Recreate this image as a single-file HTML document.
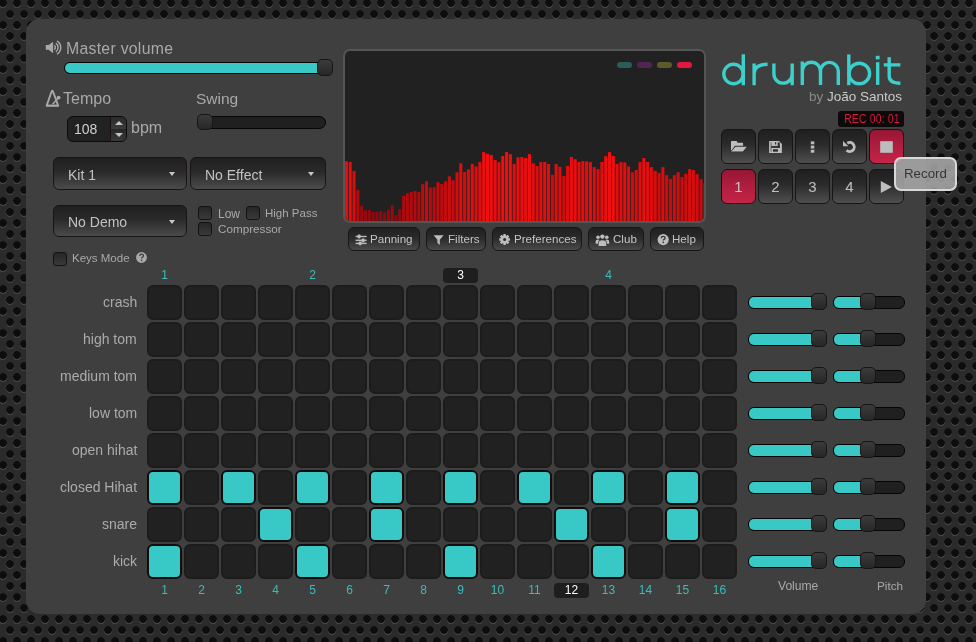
<!DOCTYPE html>
<html><head><meta charset="utf-8">
<style>
*{box-sizing:border-box;margin:0;padding:0}
html,body{width:976px;height:642px;overflow:hidden}
body{font-family:"Liberation Sans",sans-serif;position:relative;background-color:#2b2b2b;
background-image:
 radial-gradient(circle at 7px 11px,#0d0d0d 0,#0d0d0d 3.45px,rgba(13,13,13,0) 4.15px),
 radial-gradient(circle at 7px 11px,#0d0d0d 0,#0d0d0d 3.45px,rgba(13,13,13,0) 4.15px),
 radial-gradient(circle at 7px 12.3px,rgba(78,78,78,.7) 0,rgba(78,78,78,.7) 3.5px,rgba(78,78,78,0) 4.2px),
 radial-gradient(circle at 7px 12.3px,rgba(78,78,78,.7) 0,rgba(78,78,78,.7) 3.5px,rgba(78,78,78,0) 4.2px);
background-size:14px 22px;background-position:-4px -8px,3px 3px,-4px -8px,3px 3px;}
.abs{position:absolute}
#panel{position:absolute;left:26px;top:19px;width:900px;height:595px;border-radius:14px;background:#3f3f3f}
.txt{position:absolute;white-space:nowrap;color:#a9a9a9;line-height:1;will-change:transform}
.trk{position:absolute;height:12px;border-radius:6px;background:#202020;border:1px solid #050505;overflow:hidden}
.trk .fill{position:absolute;left:0;top:0;bottom:0;background:#38c8c6}
.thumb{position:absolute;width:15px;height:17px;border-radius:5px;background:linear-gradient(#3b3b3b,#272727);border:1px solid #1a1414}
.sel{position:absolute;height:33px;border-radius:6px;border:1px solid #1a1515;background:linear-gradient(#1f1f1f 0%,#2a2a2a 45%,#4b4b4b 100%);color:#c2c2c2;font-size:14px;line-height:35px;white-space:nowrap;will-change:transform}
.sel .arr{position:absolute;right:11px;top:13.5px;width:0;height:0;border-left:3.6px solid transparent;border-right:3.6px solid transparent;border-top:4.4px solid #c8c8c8}
.cb{position:absolute;width:14px;height:14px;border-radius:3px;border:1px solid #161212;background:linear-gradient(#262626,#3a3a3a)}
.cell{position:absolute;width:35px;height:35px;border-radius:6px;background:#212121;border:2px solid #1c1c1c}
.cell.on{background:#38c8c5;border:2px solid #120d0d}
.dlab{position:absolute;right:839px;height:35px;line-height:35px;font-size:14px;color:#ababab;white-space:nowrap;text-align:right;will-change:transform}
.bnum{position:absolute;width:35px;height:15px;line-height:15px;text-align:center;font-size:12px;color:#3bbcbc;will-change:transform}
.bnum.hl{background:#1e1e1e;color:#fff;border-radius:4px}
.btn{position:absolute;height:24px;border-radius:6px;border:1px solid #1a1515;background:linear-gradient(#202020,#2a2a2a 45%,#4a4a4a)}
.sq{position:absolute;width:35px;height:35px;border-radius:6px;border:1px solid #1a1515;background:linear-gradient(#1f1f1f,#2b2b2b 45%,#4f4f4f);color:#c0c0c0;font-size:15px;text-align:center;line-height:34px;will-change:transform}
.sq.red{background:linear-gradient(#961634,#b01e3f 50%,#c42447);border-color:#1a1010}
</style></head><body>
<div id="panel"></div>

<!-- master volume -->
<svg class="abs" style="left:42px;top:37px" width="24" height="20" viewBox="42 37 24 20">
 <path d="M45.8 45.1H48.6L53.1 41.8V53.2L48.6 49.8H45.8z" fill="#a9a9a9"/>
 <path d="M54.3 45.4A2.6 2.6 0 0 1 54.3 49.6M55.8 43.2A5.2 5.2 0 0 1 55.8 51.8M57 40.8A7.9 7.9 0 0 1 57 54.2" stroke="#a9a9a9" stroke-width="1.4" fill="none"/>
</svg>
<div class="txt" style="left:66px;top:40.8px;font-size:15.8px;letter-spacing:0.28px">Master volume</div>
<div class="trk" style="left:64px;top:62px;width:268px"><div class="fill" style="width:260px"></div></div>
<div class="thumb" style="left:317px;top:59px;width:16px"></div>

<!-- tempo -->
<svg class="abs" style="left:42px;top:86px" width="24" height="24" viewBox="42 86 24 24">
 <path d="M52.3 90.6Q51.8 90.6 51.4 92L46.6 105.8H58.2L53.2 92Q52.8 90.6 52.3 90.6z" fill="none" stroke="#a9a9a9" stroke-width="1.9" stroke-linejoin="round"/>
 <path d="M47.5 105.5H57.6" stroke="#a9a9a9" stroke-width="1.5"/>
 <path d="M52.6 104.2L58.4 97.7" stroke="#a9a9a9" stroke-width="1.5"/>
 <circle cx="58.6" cy="97.6" r="1.9" fill="#a9a9a9"/>
</svg>
<div class="txt" style="left:63px;top:90.5px;font-size:16px">Tempo</div>
<div class="abs" style="left:67px;top:116px;width:60px;height:25.5px;border-radius:6px;background:#222;border:1px solid #0b0b0b;overflow:hidden">
 <div class="txt" style="left:5.5px;top:5px;font-size:14px;color:#cfcfcf">108</div>
 <div class="abs" style="left:41.5px;top:0;width:18px;height:12px;background:linear-gradient(#2a2a2a,#3b3b3b);border-left:1px solid #1c1212"></div>
 <div class="abs" style="left:41.5px;top:12px;width:18px;height:12px;background:linear-gradient(#262626,#3a3a3a);border-left:1px solid #1c1212"></div>
 <div class="abs" style="left:46.6px;top:4.2px;width:0;height:0;border-left:4.1px solid transparent;border-right:4.1px solid transparent;border-bottom:4.2px solid #c4c4c4"></div>
 <div class="abs" style="left:46.6px;top:16.2px;width:0;height:0;border-left:4.1px solid transparent;border-right:4.1px solid transparent;border-top:4.2px solid #c4c4c4"></div>
</div>
<div class="txt" style="left:131px;top:120px;font-size:16px">bpm</div>

<!-- swing -->
<div class="txt" style="left:196px;top:90.5px;font-size:15.5px">Swing</div>
<div class="trk" style="left:197px;top:116px;width:129px;height:13px;border-radius:6.5px"></div>
<div class="thumb" style="left:197px;top:114px;height:16px;width:16px"></div>

<!-- selects -->
<div class="sel" style="left:53px;top:157px;width:134px;padding-left:14px">Kit 1<span class="arr"></span></div>
<div class="sel" style="left:190px;top:157px;width:136px;padding-left:14px">No Effect<span class="arr"></span></div>
<div class="sel" style="left:53px;top:205px;width:134px;height:32px;line-height:33px;padding-left:14px">No Demo<span class="arr"></span></div>

<!-- checkboxes -->
<div class="cb" style="left:198px;top:206px"></div>
<div class="txt" style="left:218px;top:207.5px;font-size:12px">Low</div>
<div class="cb" style="left:246px;top:206px"></div>
<div class="txt" style="left:265px;top:207.5px;font-size:11.5px">High Pass</div>
<div class="cb" style="left:198px;top:222px"></div>
<div class="txt" style="left:218px;top:223px;font-size:11.7px">Compressor</div>
<div class="cb" style="left:53px;top:252px"></div>
<div class="txt" style="left:72px;top:252.5px;font-size:11.5px">Keys Mode</div>
<svg class="abs" style="left:136px;top:252px" width="11" height="11" viewBox="0 0 11 11">
 <circle cx="5.5" cy="5.5" r="5.4" fill="#a9a9a9"/>
 <path d="M3.8 4.1q0-1.9 1.8-1.9q1.8 0 1.8 1.6q0 1-1.1 1.5q-.6.3-.6 1.1" fill="none" stroke="#3f3f3f" stroke-width="1.3"/>
 <circle cx="5.6" cy="8.4" r=".8" fill="#3f3f3f"/>
</svg>

<!-- visualizer -->
<div class="abs" style="left:343px;top:49px;width:363px;height:174px;border-radius:7px;border:2px solid #555;background:#212121;overflow:hidden">
 <svg class="abs" style="left:0;top:0" width="360" height="170"><rect x="-0.10" y="110.3" width="3.05" height="61.7" fill="rgb(231,13,14)"/><rect x="3.71" y="111.0" width="3.05" height="61.0" fill="rgb(229,13,14)"/><rect x="7.53" y="119.9" width="3.05" height="52.1" fill="rgb(214,12,14)"/><rect x="11.34" y="139.1" width="3.05" height="32.9" fill="rgb(182,10,14)"/><rect x="15.15" y="155.0" width="3.05" height="17.0" fill="rgb(155,9,14)"/><rect x="18.96" y="159.3" width="3.05" height="12.7" fill="rgb(148,8,14)"/><rect x="22.78" y="159.0" width="3.05" height="13.0" fill="rgb(148,9,14)"/><rect x="26.59" y="161.0" width="3.05" height="11.0" fill="rgb(145,8,14)"/><rect x="30.40" y="161.0" width="3.05" height="11.0" fill="rgb(145,8,14)"/><rect x="34.22" y="160.0" width="3.05" height="12.0" fill="rgb(146,8,14)"/><rect x="38.03" y="161.5" width="3.05" height="10.5" fill="rgb(144,8,14)"/><rect x="41.84" y="159.0" width="3.05" height="13.0" fill="rgb(148,9,14)"/><rect x="45.66" y="154.4" width="3.05" height="17.6" fill="rgb(156,9,14)"/><rect x="49.47" y="164.0" width="3.05" height="8.0" fill="rgb(140,8,14)"/><rect x="53.28" y="158.3" width="3.05" height="13.7" fill="rgb(149,9,14)"/><rect x="57.09" y="144.8" width="3.05" height="27.2" fill="rgb(172,10,14)"/><rect x="60.91" y="142.3" width="3.05" height="29.7" fill="rgb(176,10,14)"/><rect x="64.72" y="141.0" width="3.05" height="31.0" fill="rgb(179,10,14)"/><rect x="68.53" y="140.1" width="3.05" height="31.9" fill="rgb(180,10,14)"/><rect x="72.35" y="141.0" width="3.05" height="31.0" fill="rgb(179,10,14)"/><rect x="76.16" y="133.1" width="3.05" height="38.9" fill="rgb(192,11,14)"/><rect x="79.97" y="130.3" width="3.05" height="41.7" fill="rgb(197,11,14)"/><rect x="83.79" y="136.5" width="3.05" height="35.5" fill="rgb(186,11,14)"/><rect x="87.60" y="136.3" width="3.05" height="35.7" fill="rgb(187,11,14)"/><rect x="91.41" y="131.2" width="3.05" height="40.8" fill="rgb(195,11,14)"/><rect x="95.22" y="133.1" width="3.05" height="38.9" fill="rgb(192,11,14)"/><rect x="99.04" y="130.3" width="3.05" height="41.7" fill="rgb(197,11,14)"/><rect x="102.85" y="125.4" width="3.05" height="46.6" fill="rgb(205,12,14)"/><rect x="106.66" y="129.4" width="3.05" height="42.6" fill="rgb(198,11,14)"/><rect x="110.48" y="121.3" width="3.05" height="50.7" fill="rgb(212,12,14)"/><rect x="114.29" y="112.3" width="3.05" height="59.7" fill="rgb(227,13,14)"/><rect x="118.10" y="121.0" width="3.05" height="51.0" fill="rgb(212,12,14)"/><rect x="121.92" y="118.4" width="3.05" height="53.6" fill="rgb(217,12,14)"/><rect x="125.73" y="112.9" width="3.05" height="59.1" fill="rgb(226,13,14)"/><rect x="129.54" y="115.5" width="3.05" height="56.5" fill="rgb(222,13,14)"/><rect x="133.36" y="111.0" width="3.05" height="61.0" fill="rgb(229,13,14)"/><rect x="137.17" y="101.1" width="3.05" height="70.9" fill="rgb(240,14,14)"/><rect x="140.98" y="102.8" width="3.05" height="69.2" fill="rgb(240,14,14)"/><rect x="144.79" y="104.0" width="3.05" height="68.0" fill="rgb(240,14,14)"/><rect x="148.61" y="109.0" width="3.05" height="63.0" fill="rgb(233,13,14)"/><rect x="152.42" y="111.1" width="3.05" height="60.9" fill="rgb(229,13,14)"/><rect x="156.23" y="105.0" width="3.05" height="67.0" fill="rgb(240,14,14)"/><rect x="160.05" y="101.1" width="3.05" height="70.9" fill="rgb(240,14,14)"/><rect x="163.86" y="103.1" width="3.05" height="68.9" fill="rgb(240,14,14)"/><rect x="167.67" y="112.9" width="3.05" height="59.1" fill="rgb(226,13,14)"/><rect x="171.49" y="106.3" width="3.05" height="65.7" fill="rgb(237,13,14)"/><rect x="175.30" y="106.0" width="3.05" height="66.0" fill="rgb(238,13,14)"/><rect x="179.11" y="106.9" width="3.05" height="65.1" fill="rgb(236,13,14)"/><rect x="182.92" y="103.1" width="3.05" height="68.9" fill="rgb(240,14,14)"/><rect x="186.74" y="112.3" width="3.05" height="59.7" fill="rgb(227,13,14)"/><rect x="190.55" y="115.0" width="3.05" height="57.0" fill="rgb(223,13,14)"/><rect x="194.36" y="111.1" width="3.05" height="60.9" fill="rgb(229,13,14)"/><rect x="198.18" y="111.0" width="3.05" height="61.0" fill="rgb(229,13,14)"/><rect x="201.99" y="113.0" width="3.05" height="59.0" fill="rgb(226,13,14)"/><rect x="205.80" y="123.9" width="3.05" height="48.1" fill="rgb(208,12,14)"/><rect x="209.62" y="112.9" width="3.05" height="59.1" fill="rgb(226,13,14)"/><rect x="213.43" y="115.8" width="3.05" height="56.2" fill="rgb(221,13,14)"/><rect x="217.24" y="125.0" width="3.05" height="47.0" fill="rgb(206,12,14)"/><rect x="221.05" y="115.0" width="3.05" height="57.0" fill="rgb(223,13,14)"/><rect x="224.87" y="106.0" width="3.05" height="66.0" fill="rgb(238,13,14)"/><rect x="228.68" y="108.2" width="3.05" height="63.8" fill="rgb(234,13,14)"/><rect x="232.49" y="111.0" width="3.05" height="61.0" fill="rgb(229,13,14)"/><rect x="236.31" y="110.1" width="3.05" height="61.9" fill="rgb(231,13,14)"/><rect x="240.12" y="110.3" width="3.05" height="61.7" fill="rgb(231,13,14)"/><rect x="243.93" y="111.1" width="3.05" height="60.9" fill="rgb(229,13,14)"/><rect x="247.75" y="116.1" width="3.05" height="55.9" fill="rgb(221,12,14)"/><rect x="251.56" y="118.1" width="3.05" height="53.9" fill="rgb(217,12,14)"/><rect x="255.37" y="111.0" width="3.05" height="61.0" fill="rgb(229,13,14)"/><rect x="259.18" y="105.2" width="3.05" height="66.8" fill="rgb(239,13,14)"/><rect x="263.00" y="101.1" width="3.05" height="70.9" fill="rgb(240,14,14)"/><rect x="266.81" y="105.0" width="3.05" height="67.0" fill="rgb(240,14,14)"/><rect x="270.62" y="112.9" width="3.05" height="59.1" fill="rgb(226,13,14)"/><rect x="274.44" y="111.1" width="3.05" height="60.9" fill="rgb(229,13,14)"/><rect x="278.25" y="111.4" width="3.05" height="60.6" fill="rgb(229,13,14)"/><rect x="282.06" y="115.5" width="3.05" height="56.5" fill="rgb(222,13,14)"/><rect x="285.88" y="121.3" width="3.05" height="50.7" fill="rgb(212,12,14)"/><rect x="289.69" y="119.0" width="3.05" height="53.0" fill="rgb(216,12,14)"/><rect x="293.50" y="111.1" width="3.05" height="60.9" fill="rgb(229,13,14)"/><rect x="297.31" y="107.1" width="3.05" height="64.9" fill="rgb(236,13,14)"/><rect x="301.13" y="111.0" width="3.05" height="61.0" fill="rgb(229,13,14)"/><rect x="304.94" y="116.1" width="3.05" height="55.9" fill="rgb(221,12,14)"/><rect x="308.75" y="119.9" width="3.05" height="52.1" fill="rgb(214,12,14)"/><rect x="312.57" y="121.9" width="3.05" height="50.1" fill="rgb(211,12,14)"/><rect x="316.38" y="116.1" width="3.05" height="55.9" fill="rgb(221,12,14)"/><rect x="320.19" y="124.1" width="3.05" height="47.9" fill="rgb(207,12,14)"/><rect x="324.00" y="127.9" width="3.05" height="44.1" fill="rgb(201,11,14)"/><rect x="327.82" y="124.1" width="3.05" height="47.9" fill="rgb(207,12,14)"/><rect x="331.63" y="121.2" width="3.05" height="50.8" fill="rgb(212,12,14)"/><rect x="335.44" y="126.0" width="3.05" height="46.0" fill="rgb(204,12,14)"/><rect x="339.26" y="122.8" width="3.05" height="49.2" fill="rgb(209,12,14)"/><rect x="343.07" y="118.0" width="3.05" height="54.0" fill="rgb(218,12,14)"/><rect x="346.88" y="119.0" width="3.05" height="53.0" fill="rgb(216,12,14)"/><rect x="350.70" y="123.2" width="3.05" height="48.8" fill="rgb(209,12,14)"/><rect x="354.51" y="128.3" width="3.05" height="43.7" fill="rgb(200,11,14)"/><rect x="358.32" y="132.4" width="3.05" height="39.6" fill="rgb(193,11,14)"/></svg>
 <div class="abs" style="left:272px;top:11px;width:15px;height:6px;border-radius:3px;background:#2b5c5a"></div>
 <div class="abs" style="left:292px;top:11px;width:15px;height:6px;border-radius:3px;background:#512553"></div>
 <div class="abs" style="left:312px;top:11px;width:15px;height:6px;border-radius:3px;background:#5b5b2a"></div>
 <div class="abs" style="left:332px;top:11px;width:15px;height:6px;border-radius:3px;background:#e3173f"></div>
</div>

<!-- tool buttons -->
<div class="btn" style="left:348px;top:227px;width:72px"></div>
<div class="btn" style="left:426px;top:227px;width:60px"></div>
<div class="btn" style="left:492px;top:227px;width:90px"></div>
<div class="btn" style="left:588px;top:227px;width:56px"></div>
<div class="btn" style="left:650px;top:227px;width:54px"></div>
<div class="txt" style="left:370px;top:234px;font-size:11.6px;color:#c4c4c4;margin-top:-1px">Panning</div>
<div class="txt" style="left:447.5px;top:234px;font-size:11.6px;color:#c4c4c4;margin-top:-1px">Filters</div>
<div class="txt" style="left:513.5px;top:234px;font-size:11.6px;color:#c4c4c4;margin-top:-1px">Preferences</div>
<div class="txt" style="left:612.5px;top:234px;font-size:11.6px;color:#c4c4c4;margin-top:-1px">Club</div>
<div class="txt" style="left:672px;top:234px;font-size:11.6px;color:#c4c4c4;margin-top:-1px">Help</div>
<svg class="abs" style="left:340px;top:225px" width="340" height="26" viewBox="340 225 340 26">
 <g fill="#bdbdbd" stroke="none">
  <!-- sliders -->
  <rect x="355.6" y="235.8" width="11" height="1.4"/><rect x="355.6" y="239.6" width="11" height="1.4"/><rect x="355.6" y="242.7" width="11" height="1.4"/>
  <rect x="357.6" y="234.6" width="3" height="3.8" rx="1"/><rect x="361.6" y="238.4" width="3" height="3.8" rx="1"/><rect x="358.6" y="241.5" width="3" height="3.8" rx="1"/>
  <!-- funnel -->
  <path d="M433.6 235.2h10l-3.8 4.6v5.1l-2.4-2v-3.1z"/>
  <!-- help circle -->
  <circle cx="663.2" cy="239.6" r="5.6"/>
  <!-- users -->
  <circle cx="602.4" cy="236.6" r="2.2"/><circle cx="598" cy="237.3" r="1.8"/><circle cx="606.8" cy="237.3" r="1.8"/>
  <path d="M598.6 246v-3.2q0-2.6 3.8-2.6q3.8 0 3.8 2.6v3.2z"/>
  <path d="M595.6 243.8v-2.2q0-2 2.4-2q1.2 0 1.6.4q-1.6.8-1.6 2.6v1.2z"/>
  <path d="M609.2 243.8v-2.2q0-2-2.4-2q-1.2 0-1.6.4q1.6.8 1.6 2.6v1.2z"/>
 </g>
 <!-- gear -->
 <g transform="translate(504.6 239.5)">
  <g fill="#bdbdbd">
   <circle r="3.9"/>
   <rect x="-1.3" y="-5.4" width="2.6" height="10.8" rx=".4"/>
   <rect x="-1.3" y="-5.4" width="2.6" height="10.8" rx=".4" transform="rotate(45)"/>
   <rect x="-1.3" y="-5.4" width="2.6" height="10.8" rx=".4" transform="rotate(90)"/>
   <rect x="-1.3" y="-5.4" width="2.6" height="10.8" rx=".4" transform="rotate(135)"/>
  </g>
  <circle r="1.5" fill="#2e2e2e"/>
 </g>
 <path d="M661.3 238.2q0-1.8 1.9-1.8q1.9 0 1.9 1.5q0 1-1.1 1.5q-.7.3-.7 1.1" fill="none" stroke="#333" stroke-width="1.3"/>
 <circle cx="663.3" cy="242.4" r=".8" fill="#333"/>
</svg>

<!-- logo -->
<svg class="abs" style="left:700px;top:40px" width="220" height="70" viewBox="700 40 220 70">
 <g fill="none" stroke="#3ccfcb" stroke-width="3.4" stroke-linecap="butt">
  <circle cx="733.5" cy="74" r="9.7"/>
  <path d="M743.3 54.3V85.2"/>
  <path d="M754.1 63.5V85.2M754.1 74q0-9.7 13.5-9.7"/>
  <path d="M773.9 63.5V74a9.15 9.15 0 0 0 18.3 0M792.2 63.5V85.2"/>
  <path d="M802.3 61.5V85M802.3 71.3a9.1 9.1 0 0 1 18.2 0V85M820.5 71.3a8.9 8.9 0 0 1 17.8 0V85"/>
  <path d="M848.8 54.4V85.2"/>
  <circle cx="859.3" cy="73.5" r="10.3"/>
  <path d="M877.7 62.2V84.9"/>
  <path d="M889.2 57.2V76q0 7.2 11.2 7.2M883.8 64.9H900.4"/>
 </g>
 <rect x="875.8" y="55.8" width="3.8" height="3.6" fill="#3ccfcb"/>
</svg>
<div class="txt" style="left:808.5px;top:89.5px;font-size:13.5px;color:#8a8a8a">by <span style="color:#c9c9c9">João Santos</span></div>

<!-- rec -->
<div class="abs" style="left:838px;top:111px;width:66px;height:16px;border-radius:3px;background:#0b0b0b"></div>
<div class="txt" style="left:844px;top:113px;font-size:12.5px;color:#d9193c;transform:scaleX(.86);transform-origin:0 0">REC 00: 01</div>

<!-- square buttons -->
<div class="sq" style="left:721px;top:129px"></div>
<div class="sq" style="left:758px;top:129px"></div>
<div class="sq" style="left:795px;top:129px"></div>
<div class="sq" style="left:832px;top:129px"></div>
<div class="sq red" style="left:869px;top:129px"></div>
<div class="sq red" style="left:721px;top:169px">1</div>
<div class="sq" style="left:758px;top:169px">2</div>
<div class="sq" style="left:795px;top:169px">3</div>
<div class="sq" style="left:832px;top:169px">4</div>
<div class="sq" style="left:869px;top:169px"></div>
<!-- icons -->
<svg class="abs" style="left:721px;top:129px" width="183" height="75" viewBox="721 129 183 75">
 <g fill="#bdbdbd">
  <!-- folder open -->
  <path d="M731 141.6q0-.7.7-.7h4.6q.6 0 .8.6l.4 1.3h4.9q.7 0 .7.7v2.3H735l-4 5.4z"/>
 </g>
 <path d="M735.1 146.1H747.8L743.2 152H730.2z" fill="#2c2c2c"/>
 <g fill="#bdbdbd">
  <path d="M735.5 146.7H746.8L742.9 151.6H731.1z"/>
  <!-- floppy -->
  <path d="M769.1 140.9H779L781.9 144.1V152.9H769.1z"/>
 </g>
 <g fill="#2f2f2f">
  <rect x="777.7" y="142.4" width="2.1" height="5.5"/>
  <rect x="771.2" y="146" width="8.6" height="1.9"/>
  <rect x="773" y="149.2" width="4.9" height="2.5"/>
  <rect x="774.9" y="142.3" width="1.3" height="2.2"/>
  <rect x="770.4" y="142.4" width="1.4" height="9.3" opacity=".45"/>
 </g>
 <g fill="#bdbdbd">
  <!-- ellipsis -->
  <rect x="810.8" y="141.4" width="3.5" height="2.9"/><rect x="810.8" y="145.6" width="3.5" height="2.9"/><rect x="810.8" y="149.8" width="3.5" height="2.9"/>
  <!-- stop -->
  <rect x="880.2" y="141.2" width="12.6" height="11.6"/>
  <!-- play -->
  <path d="M880.8 181v12l11.1-6z"/>
  <!-- undo arrow -->
  <path d="M843 141V146.3H848.4z"/>
 </g>
 <path d="M847.3 143.2A4.5 4.5 0 1 1 846.6 150.2" fill="none" stroke="#bdbdbd" stroke-width="2.9"/>
</svg>

<!-- tooltip -->
<div class="abs" style="left:894px;top:157px;width:63px;height:34px;border-radius:7px;border:2px solid #d9d9d9;background:rgba(172,172,172,.85)"></div>
<div class="txt" style="left:903.5px;top:167px;font-size:13.3px;color:#353535">Record</div>

<!-- grid -->
<div class="dlab" style="top:285px">crash</div><div class="dlab" style="top:322px">high tom</div><div class="dlab" style="top:359px">medium tom</div><div class="dlab" style="top:396px">low tom</div><div class="dlab" style="top:433px">open hihat</div><div class="dlab" style="top:470px">closed Hihat</div><div class="dlab" style="top:507px">snare</div><div class="dlab" style="top:544px">kick</div>
<div class="bnum" style="left:147px;top:268px">1</div><div class="bnum" style="left:295px;top:268px">2</div><div class="bnum" style="left:591px;top:268px">4</div><div class="bnum hl" style="left:443px;top:268px">3</div>
<div class="cell" style="left:147px;top:285px"></div><div class="cell" style="left:184px;top:285px"></div><div class="cell" style="left:221px;top:285px"></div><div class="cell" style="left:258px;top:285px"></div><div class="cell" style="left:295px;top:285px"></div><div class="cell" style="left:332px;top:285px"></div><div class="cell" style="left:369px;top:285px"></div><div class="cell" style="left:406px;top:285px"></div><div class="cell" style="left:443px;top:285px"></div><div class="cell" style="left:480px;top:285px"></div><div class="cell" style="left:517px;top:285px"></div><div class="cell" style="left:554px;top:285px"></div><div class="cell" style="left:591px;top:285px"></div><div class="cell" style="left:628px;top:285px"></div><div class="cell" style="left:665px;top:285px"></div><div class="cell" style="left:702px;top:285px"></div><div class="cell" style="left:147px;top:322px"></div><div class="cell" style="left:184px;top:322px"></div><div class="cell" style="left:221px;top:322px"></div><div class="cell" style="left:258px;top:322px"></div><div class="cell" style="left:295px;top:322px"></div><div class="cell" style="left:332px;top:322px"></div><div class="cell" style="left:369px;top:322px"></div><div class="cell" style="left:406px;top:322px"></div><div class="cell" style="left:443px;top:322px"></div><div class="cell" style="left:480px;top:322px"></div><div class="cell" style="left:517px;top:322px"></div><div class="cell" style="left:554px;top:322px"></div><div class="cell" style="left:591px;top:322px"></div><div class="cell" style="left:628px;top:322px"></div><div class="cell" style="left:665px;top:322px"></div><div class="cell" style="left:702px;top:322px"></div><div class="cell" style="left:147px;top:359px"></div><div class="cell" style="left:184px;top:359px"></div><div class="cell" style="left:221px;top:359px"></div><div class="cell" style="left:258px;top:359px"></div><div class="cell" style="left:295px;top:359px"></div><div class="cell" style="left:332px;top:359px"></div><div class="cell" style="left:369px;top:359px"></div><div class="cell" style="left:406px;top:359px"></div><div class="cell" style="left:443px;top:359px"></div><div class="cell" style="left:480px;top:359px"></div><div class="cell" style="left:517px;top:359px"></div><div class="cell" style="left:554px;top:359px"></div><div class="cell" style="left:591px;top:359px"></div><div class="cell" style="left:628px;top:359px"></div><div class="cell" style="left:665px;top:359px"></div><div class="cell" style="left:702px;top:359px"></div><div class="cell" style="left:147px;top:396px"></div><div class="cell" style="left:184px;top:396px"></div><div class="cell" style="left:221px;top:396px"></div><div class="cell" style="left:258px;top:396px"></div><div class="cell" style="left:295px;top:396px"></div><div class="cell" style="left:332px;top:396px"></div><div class="cell" style="left:369px;top:396px"></div><div class="cell" style="left:406px;top:396px"></div><div class="cell" style="left:443px;top:396px"></div><div class="cell" style="left:480px;top:396px"></div><div class="cell" style="left:517px;top:396px"></div><div class="cell" style="left:554px;top:396px"></div><div class="cell" style="left:591px;top:396px"></div><div class="cell" style="left:628px;top:396px"></div><div class="cell" style="left:665px;top:396px"></div><div class="cell" style="left:702px;top:396px"></div><div class="cell" style="left:147px;top:433px"></div><div class="cell" style="left:184px;top:433px"></div><div class="cell" style="left:221px;top:433px"></div><div class="cell" style="left:258px;top:433px"></div><div class="cell" style="left:295px;top:433px"></div><div class="cell" style="left:332px;top:433px"></div><div class="cell" style="left:369px;top:433px"></div><div class="cell" style="left:406px;top:433px"></div><div class="cell" style="left:443px;top:433px"></div><div class="cell" style="left:480px;top:433px"></div><div class="cell" style="left:517px;top:433px"></div><div class="cell" style="left:554px;top:433px"></div><div class="cell" style="left:591px;top:433px"></div><div class="cell" style="left:628px;top:433px"></div><div class="cell" style="left:665px;top:433px"></div><div class="cell" style="left:702px;top:433px"></div><div class="cell on" style="left:147px;top:470px"></div><div class="cell" style="left:184px;top:470px"></div><div class="cell on" style="left:221px;top:470px"></div><div class="cell" style="left:258px;top:470px"></div><div class="cell on" style="left:295px;top:470px"></div><div class="cell" style="left:332px;top:470px"></div><div class="cell on" style="left:369px;top:470px"></div><div class="cell" style="left:406px;top:470px"></div><div class="cell on" style="left:443px;top:470px"></div><div class="cell" style="left:480px;top:470px"></div><div class="cell on" style="left:517px;top:470px"></div><div class="cell" style="left:554px;top:470px"></div><div class="cell on" style="left:591px;top:470px"></div><div class="cell" style="left:628px;top:470px"></div><div class="cell on" style="left:665px;top:470px"></div><div class="cell" style="left:702px;top:470px"></div><div class="cell" style="left:147px;top:507px"></div><div class="cell" style="left:184px;top:507px"></div><div class="cell" style="left:221px;top:507px"></div><div class="cell on" style="left:258px;top:507px"></div><div class="cell" style="left:295px;top:507px"></div><div class="cell" style="left:332px;top:507px"></div><div class="cell on" style="left:369px;top:507px"></div><div class="cell" style="left:406px;top:507px"></div><div class="cell" style="left:443px;top:507px"></div><div class="cell" style="left:480px;top:507px"></div><div class="cell" style="left:517px;top:507px"></div><div class="cell on" style="left:554px;top:507px"></div><div class="cell" style="left:591px;top:507px"></div><div class="cell" style="left:628px;top:507px"></div><div class="cell on" style="left:665px;top:507px"></div><div class="cell" style="left:702px;top:507px"></div><div class="cell on" style="left:147px;top:544px"></div><div class="cell" style="left:184px;top:544px"></div><div class="cell" style="left:221px;top:544px"></div><div class="cell" style="left:258px;top:544px"></div><div class="cell on" style="left:295px;top:544px"></div><div class="cell" style="left:332px;top:544px"></div><div class="cell" style="left:369px;top:544px"></div><div class="cell" style="left:406px;top:544px"></div><div class="cell on" style="left:443px;top:544px"></div><div class="cell" style="left:480px;top:544px"></div><div class="cell" style="left:517px;top:544px"></div><div class="cell" style="left:554px;top:544px"></div><div class="cell on" style="left:591px;top:544px"></div><div class="cell" style="left:628px;top:544px"></div><div class="cell" style="left:665px;top:544px"></div><div class="cell" style="left:702px;top:544px"></div>
<div class="bnum" style="left:147px;top:583px">1</div><div class="bnum" style="left:184px;top:583px">2</div><div class="bnum" style="left:221px;top:583px">3</div><div class="bnum" style="left:258px;top:583px">4</div><div class="bnum" style="left:295px;top:583px">5</div><div class="bnum" style="left:332px;top:583px">6</div><div class="bnum" style="left:369px;top:583px">7</div><div class="bnum" style="left:406px;top:583px">8</div><div class="bnum" style="left:443px;top:583px">9</div><div class="bnum" style="left:480px;top:583px">10</div><div class="bnum" style="left:517px;top:583px">11</div><div class="bnum hl" style="left:554px;top:583px">12</div><div class="bnum" style="left:591px;top:583px">13</div><div class="bnum" style="left:628px;top:583px">14</div><div class="bnum" style="left:665px;top:583px">15</div><div class="bnum" style="left:702px;top:583px">16</div>
<div class="trk" style="left:748px;top:295.9px;width:79px;height:13px"><div class="fill" style="width:70px"></div></div><div class="thumb" style="left:811px;top:293.0px;width:16px"></div><div class="trk" style="left:833px;top:295.9px;width:72px;height:13px"><div class="fill" style="width:30px"></div></div><div class="thumb" style="left:859.5px;top:293.0px;width:16px"></div><div class="trk" style="left:748px;top:332.9px;width:79px;height:13px"><div class="fill" style="width:70px"></div></div><div class="thumb" style="left:811px;top:330.0px;width:16px"></div><div class="trk" style="left:833px;top:332.9px;width:72px;height:13px"><div class="fill" style="width:30px"></div></div><div class="thumb" style="left:859.5px;top:330.0px;width:16px"></div><div class="trk" style="left:748px;top:369.9px;width:79px;height:13px"><div class="fill" style="width:70px"></div></div><div class="thumb" style="left:811px;top:367.0px;width:16px"></div><div class="trk" style="left:833px;top:369.9px;width:72px;height:13px"><div class="fill" style="width:30px"></div></div><div class="thumb" style="left:859.5px;top:367.0px;width:16px"></div><div class="trk" style="left:748px;top:406.9px;width:79px;height:13px"><div class="fill" style="width:70px"></div></div><div class="thumb" style="left:811px;top:404.0px;width:16px"></div><div class="trk" style="left:833px;top:406.9px;width:72px;height:13px"><div class="fill" style="width:30px"></div></div><div class="thumb" style="left:859.5px;top:404.0px;width:16px"></div><div class="trk" style="left:748px;top:443.9px;width:79px;height:13px"><div class="fill" style="width:70px"></div></div><div class="thumb" style="left:811px;top:441.0px;width:16px"></div><div class="trk" style="left:833px;top:443.9px;width:72px;height:13px"><div class="fill" style="width:30px"></div></div><div class="thumb" style="left:859.5px;top:441.0px;width:16px"></div><div class="trk" style="left:748px;top:480.9px;width:79px;height:13px"><div class="fill" style="width:70px"></div></div><div class="thumb" style="left:811px;top:478.0px;width:16px"></div><div class="trk" style="left:833px;top:480.9px;width:72px;height:13px"><div class="fill" style="width:30px"></div></div><div class="thumb" style="left:859.5px;top:478.0px;width:16px"></div><div class="trk" style="left:748px;top:517.9px;width:79px;height:13px"><div class="fill" style="width:70px"></div></div><div class="thumb" style="left:811px;top:515.0px;width:16px"></div><div class="trk" style="left:833px;top:517.9px;width:72px;height:13px"><div class="fill" style="width:30px"></div></div><div class="thumb" style="left:859.5px;top:515.0px;width:16px"></div><div class="trk" style="left:748px;top:554.9px;width:79px;height:13px"><div class="fill" style="width:70px"></div></div><div class="thumb" style="left:811px;top:552.0px;width:16px"></div><div class="trk" style="left:833px;top:554.9px;width:72px;height:13px"><div class="fill" style="width:30px"></div></div><div class="thumb" style="left:859.5px;top:552.0px;width:16px"></div>
<div class="txt" style="left:778px;top:580px;font-size:12.1px">Volume</div>
<div class="txt" style="left:877px;top:580px;font-size:11.7px">Pitch</div>
</body></html>
